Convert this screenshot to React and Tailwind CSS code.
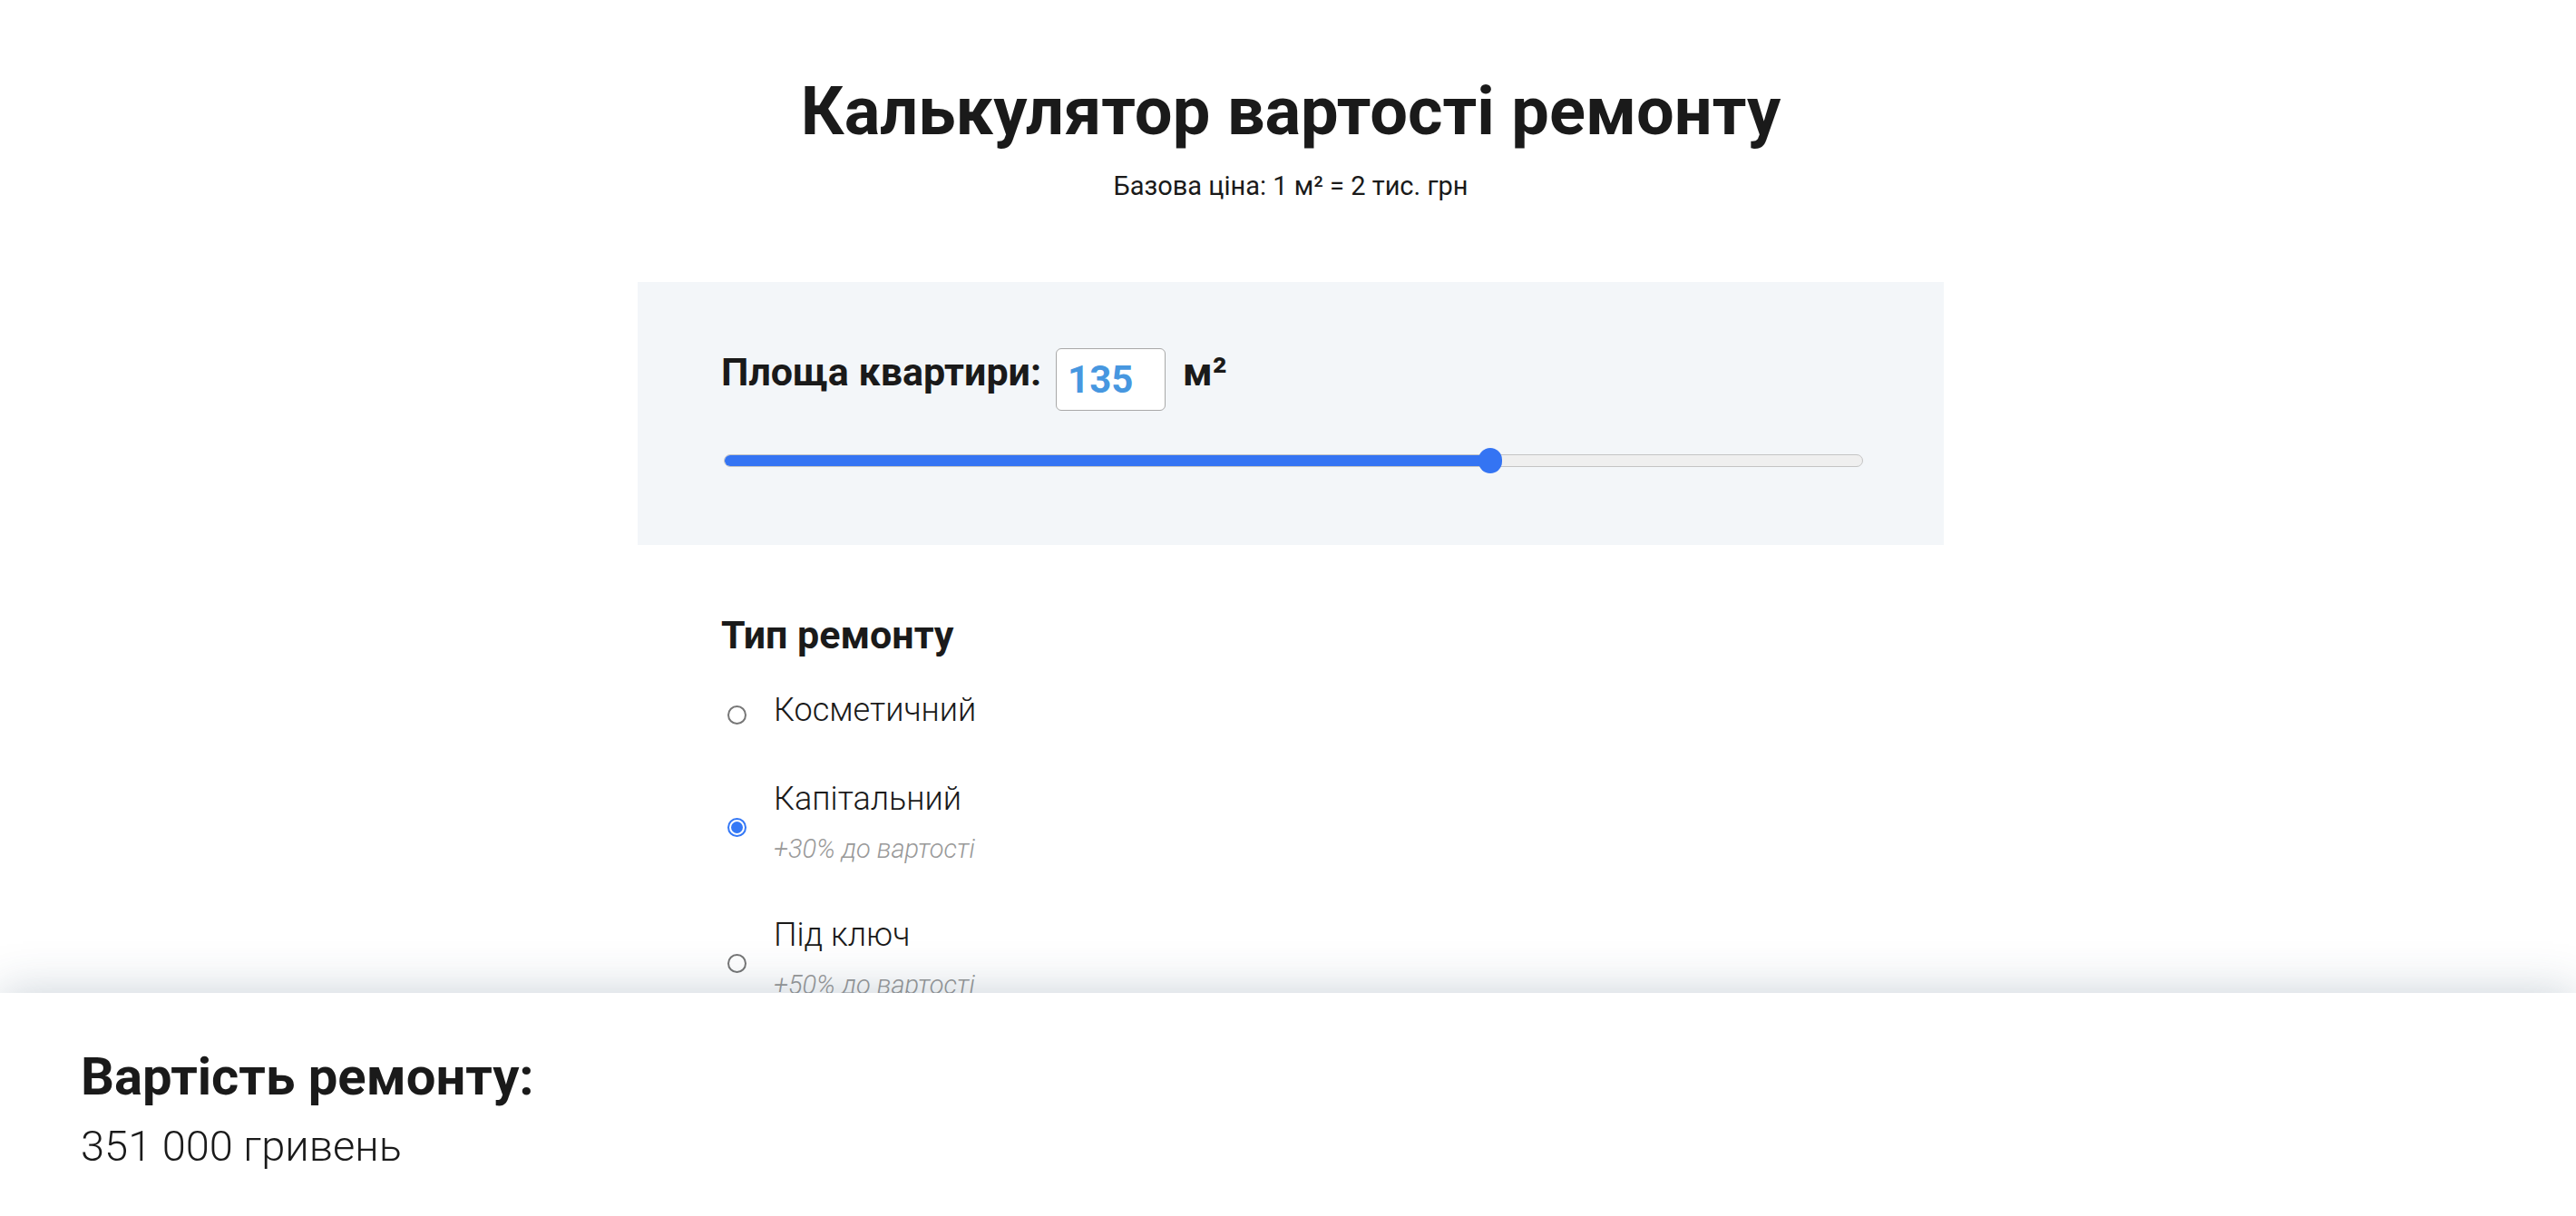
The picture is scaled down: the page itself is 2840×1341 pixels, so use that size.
import { useState } from 'react';

const OPTIONS = [
  { id: 'cosmetic', label: 'Косметичний', note: null },
  { id: 'capital', label: 'Капітальний', note: '+30% до вартості' },
  { id: 'turnkey', label: 'Під ключ', note: '+50% до вартості' },
];

function Radio({ checked }) {
  if (checked) {
    return (
      <span className="ml-[7px] mt-[10px] flex h-[21px] w-[21px] shrink-0 items-center justify-center rounded-full border-2 border-[#3478f6] bg-white">
        <span className="h-[13px] w-[13px] rounded-full bg-[#3478f6]" />
      </span>
    );
  }
  return <span className="ml-[7px] mt-[10px] h-[21px] w-[21px] shrink-0 rounded-full border-2 border-[#767676] bg-white" />;
}

function Slider({ value, max }) {
  const frac = value / max;
  const center = 13 + frac * (1258 - 26);
  return (
    <div className="relative mx-[3px] mt-[41px] flex h-[28px] items-center">
      <div className="relative h-[14px] w-full overflow-hidden rounded-full border border-[#c4c4c4] bg-[#efefef]">
        <div className="h-full bg-[#3474f3]" style={{ width: center }} />
      </div>
      <div
        className="absolute top-0 h-[28px] w-[26px] rounded-full bg-[#3474f3]"
        style={{ left: center - 13 }}
      />
    </div>
  );
}

export default function App() {
  const [type] = useState('capital');
  const area = 135;

  return (
    <div className="min-h-screen bg-white pb-[300px] text-[#1a1a1a] [font-family:Roboto,sans-serif]">
      <main className="flex flex-col items-center pl-[6px]">
        <h1 className="pt-[86px] text-[74px] font-bold leading-[74px]">Калькулятор вартості ремонту</h1>
        <p className="mt-[31px] text-[29px] leading-[29px]">Базова ціна: 1 м² = 2 тис. грн</p>

        <div className="w-[1440px]">
          <section className="mt-[91px] h-[290px] bg-[#f3f6f9] pl-[92px] pr-[86px] pt-[73px]">
            <div className="flex items-start">
              <span className="mt-[5px] text-[43px] font-bold leading-[43px]">Площа квартири:</span>
              <div className="ml-[16px] flex h-[69px] w-[121px] items-center rounded-[6px] border border-[#a8a8a8] bg-white pl-[12px] text-[42px] font-bold text-[#4797e0]">
                {area}
              </div>
              <span className="ml-[19px] mt-[5px] text-[43px] font-bold leading-[43px]">м²</span>
            </div>
            <Slider value={area} max={200} />
          </section>

          <section className="pl-[92px] pt-[78px]">
            <h2 className="text-[43px] font-bold leading-[43px]">Тип ремонту</h2>
            <div className="mt-[43px] flex flex-col gap-[62px]">
              {OPTIONS.map((o) => (
                <label key={o.id} className="flex items-center">
                  <Radio checked={type === o.id} />
                  <div className="ml-[30px]">
                    <div className="text-[36px] font-light leading-[36px]">{o.label}</div>
                    {o.note && (
                      <div className="mt-[23px] text-[29px] font-light italic leading-[29px] text-[#999999]">{o.note}</div>
                    )}
                  </div>
                </label>
              ))}
            </div>
          </section>
        </div>
      </main>

      <footer className="fixed inset-x-0 bottom-0 h-[246px] bg-white pl-[89px] pt-[63px] shadow-[0_0_50px_rgba(40,70,100,0.25)]">
        <h3 className="text-[58px] font-bold leading-[58px]">Вартість ремонту:</h3>
        <p className="mt-[24px] text-[47px] font-light leading-[47px]">351 000 гривень</p>
      </footer>
    </div>
  );
}
